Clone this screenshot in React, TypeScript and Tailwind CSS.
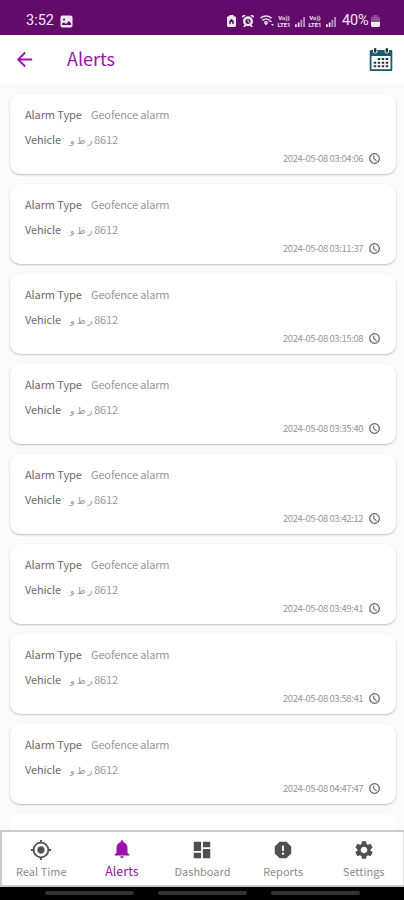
import React from "react";
import {
  MdArrowBack,
  MdDashboard,
  MdMyLocation,
  MdNotifications,
  MdReport,
  MdSettings,
} from "react-icons/md";

const times = [
  "2024-05-08 03:04:06",
  "2024-05-08 03:11:37",
  "2024-05-08 03:15:08",
  "2024-05-08 03:35:40",
  "2024-05-08 03:42:12",
  "2024-05-08 03:49:41",
  "2024-05-08 03:58:41",
  "2024-05-08 04:47:47",
];

const tabs = [
  { name: "Real Time", icon: MdMyLocation },
  { name: "Alerts", icon: MdNotifications, active: true },
  { name: "Dashboard", icon: MdDashboard },
  { name: "Reports", icon: MdReport },
  { name: "Settings", icon: MdSettings },
];

const Signal = () => (
  <svg width="10" height="10" viewBox="0 0 11 11" className="mt-[2px] ml-[3px]">
    <path d="M0 8h2v3H0zM3 6h2v5H3z" fill="#eadcec" />
    <path d="M6 3h2v8H6zM9 0h2v11H9z" fill="#b98fc0" />
  </svg>
);

const Lte = () => (
  <div className="ml-[2px] flex h-[14px] w-[16px] flex-col items-center text-[6px] leading-[7px] font-bold">
    <span className="h-[7px]">Vo))</span>
    <span className="h-[7px]">LTE1</span>
  </div>
);

const StatusBar = () => (
  <div className="flex h-[35px] shrink-0 items-center bg-[#620b6b] pt-[7px] pl-[26px] font-[Roboto,sans-serif] text-[#f1e7f2]">
    <span className="w-[34px] text-[14.5px] leading-4">3:52</span>
    <svg width="13" height="13" viewBox="0 0 13 13">
      <rect x="0.5" y="0.5" width="12" height="12" rx="2" fill="#f1e7f2" />
      <circle cx="4" cy="4.5" r="1.1" fill="#620b6b" />
      <path d="M2 10V8.5l2-1 2 1.5 3-3 2 2.5V10z" fill="#620b6b" />
    </svg>
    <svg width="9" height="12" viewBox="0 0 9 12" className="ml-[154px]">
      <path d="M2.5 0h4v1.2H8l1 1V11l-1 1H1l-1-1V2.2l1-1h1.5z" fill="#f1e7f2" />
      <path d="M2.3 9V6l2.2-2.2L6.7 6v3H5.3V7H3.7v2z" fill="#620b6b" />
    </svg>
    <svg width="12" height="12" viewBox="0 0 12 12" className="ml-[6px]">
      <path d="M0 2l3-2M12 2L9 0M2 12l1.5-2M10 12l-1.5-2" stroke="#f1e7f2" strokeWidth="1.8" />
      <circle cx="6" cy="6.3" r="3.8" fill="none" stroke="#f1e7f2" strokeWidth="2.4" />
      <path d="M6 4.3v2.2l1.5 1" fill="none" stroke="#f1e7f2" />
    </svg>
    <svg width="14" height="12" viewBox="0 0 14 12" className="ml-[6px]">
      <path
        d="M0.5 3.2Q6 -1 11.5 3.2M2.3 5.4Q6 2.4 9.7 5.4M4.2 7.6Q6 6 7.8 7.6"
        fill="none"
        stroke="#eadcec"
        strokeWidth="1.5"
      />
      <path d="M4 8h4l-2 2.5zM9 7l1.7-2 1.3 2zM11 9h3l-1.5 2z" fill="#eadcec" />
    </svg>
    <Lte />
    <Signal />
    <Lte />
    <Signal />
    <span className="ml-[6px] w-[29px] text-[14.5px] leading-4 tracking-[-0.1px]">40%</span>
    <svg width="9" height="12" viewBox="0 0 9 12">
      <path d="M2.5 0h4v1.5H8l1 1V7H0V2.5l1-1h1.5z" fill="#8e4b96" />
      <path d="M0 7h9v4l-1 1H1l-1-1z" fill="#f1e7f2" />
    </svg>
  </div>
);

const CalendarIcon = () => (
  <svg width="24" height="25" viewBox="0 0 24 25">
    <rect x="0.7" y="3" width="22.6" height="21" rx="1" fill="#1b5b72" />
    <rect x="2.5" y="9" width="19" height="13.2" fill="#fff" />
    <rect x="4" y="0.5" width="4.4" height="6" rx="2" fill="#fff" />
    <rect x="15.6" y="0.5" width="4.4" height="6" rx="2" fill="#fff" />
    <rect x="5" y="1" width="2.4" height="4.8" rx="1.2" fill="#173746" />
    <rect x="16.6" y="1" width="2.4" height="4.8" rx="1.2" fill="#173746" />
    <path
      d="M8.7 11h2.5v2H8.7zM12.7 11h2.5v2h-2.5zM16.7 11h2.5v2h-2.5zM4.7 14.7h2.5v2H4.7zM8.7 14.7h2.5v2H8.7zM12.7 14.7h2.5v2h-2.5zM16.7 14.7h2.5v2h-2.5zM4.7 18.3h2.5v2H4.7zM8.7 18.3h2.5v2H8.7zM12.7 18.3h2.5v2h-2.5zM16.7 18.3h2.5v2h-2.5z"
      fill="#24343c"
    />
  </svg>
);

const ClockIcon = () => (
  <svg width="11" height="11" viewBox="0 0 11 11" fill="none" stroke="#606060">
    <circle cx="5.5" cy="5.5" r="4.8" strokeWidth="1.2" />
    <path d="M4.7 2.4v3.2l2.9 2.2" strokeWidth="1.1" />
  </svg>
);

const AlertCard = ({ time }: { time: string }) => (
  <div className="h-[80px] shrink-0 rounded-[10px] bg-white px-[15px] pt-[10px] text-[11px] text-[#989898] shadow-[0_1px_2px_rgba(0,0,0,0.24)]">
    <div className="flex h-5 items-center">
      <span className="w-[66px] tracking-[-0.1px] whitespace-nowrap text-[#6c6c6c]">Alarm Type</span>
      <span className="tracking-[-0.15px]">Geofence alarm</span>
    </div>
    <div className="mt-[5px] flex h-5 items-center">
      <span className="w-[45px] tracking-[-0.1px] text-[#6c6c6c]">Vehicle</span>
      <span dir="rtl" className="flex items-center gap-[2px] whitespace-nowrap">
        <span className="tracking-[-0.2px]">8612</span>
        <span className="pt-[3px] text-[9.5px]">ر ط و</span>
      </span>
    </div>
    <div className="mt-px flex h-4 items-center justify-end gap-[5px] pr-px text-[9.5px]">
      <span className="w-[81px] whitespace-nowrap tracking-[-0.4px]">{time}</span>
      <ClockIcon />
    </div>
  </div>
);

const App = () => {
  return (
    <div className="flex h-[900px] w-[404px] flex-col overflow-hidden bg-[#fafafa] font-['Noto_Sans_CJK_SC','DejaVu_Sans',sans-serif]">
      <StatusBar />
      <header className="flex h-[49px] shrink-0 items-center bg-white pr-[11px] pb-px pl-[13px] text-[#9a12a8]">
        <MdArrowBack size={23} />
        <h1 className="mb-[3px] ml-[31px] flex-1 text-[18px] leading-6">Alerts</h1>
        <CalendarIcon />
      </header>
      <main className="flex flex-1 flex-col gap-[10px] overflow-hidden pt-[10px] pr-[8px] pl-[10px]">
        {times.map((time) => (
          <AlertCard key={time} time={time} />
        ))}
        <div className="h-[80px] shrink-0 rounded-[10px] bg-white" />
      </main>
      <nav className="grid h-[57px] shrink-0 grid-cols-5 border-y-2 border-[#cacaca] bg-white pl-px shadow-[inset_2px_0_0_#cacaca,inset_-1px_0_0_#dcdcdc]">
        {tabs.map(({ name, icon: Icon, active }) => (
          <div
            key={name}
            className={
              active
                ? "flex flex-col items-center pt-[6px] text-[#9a12a8]"
                : "flex flex-col items-center pt-[7px] text-[#505050]"
            }
          >
            <Icon size={22} />
            <span
              className={
                active
                  ? "mt-[3px] text-[12.5px] leading-4 whitespace-nowrap"
                  : "mt-[2px] text-[11px] leading-4 whitespace-nowrap text-[#8c8c8c]"
              }
            >
              {name}
            </span>
          </div>
        ))}
      </nav>
      <div className="flex h-[13px] shrink-0 justify-center gap-[24px] bg-black pt-[4px]">
        <div className="h-[4px] w-[89px] rounded-full bg-[#343434]" />
        <div className="h-[4px] w-[89px] rounded-full bg-[#343434]" />
        <div className="h-[4px] w-[89px] rounded-full bg-[#343434]" />
      </div>
    </div>
  );
};

export default App;
